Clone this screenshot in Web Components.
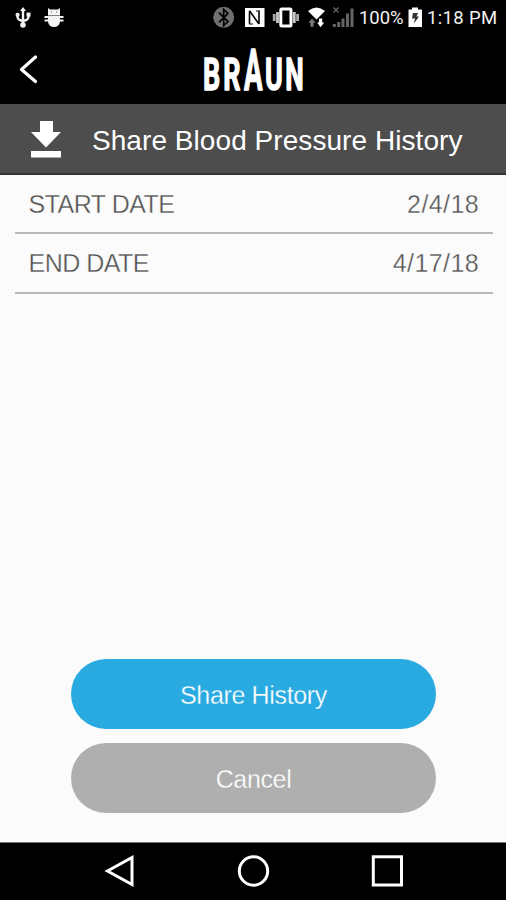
<!DOCTYPE html>
<html lang="en">
<head>
<meta charset="utf-8">
<title>Share Blood Pressure History</title>
<style>html,body{margin:0;height:100%;background:#fbfbfb}</style>
</head>
<body>
<share-screen></share-screen>
<script>
const define = (name, html) => customElements.define(name, class extends HTMLElement {
  constructor() {
    super();
    const t = document.createElement('template');
    t.innerHTML = html;
    this.attachShadow({ mode: 'open' }).append(t.content.cloneNode(true));
  }
});

define('status-bar', `
<style>
:host{display:flex;height:36px;background:#000;color:#f2f2f2;font:400 18.5px/37px Roboto,sans-serif}
svg{display:block;flex:none}
.pct{width:47px;margin-left:2px;letter-spacing:-.05px}
.time{margin-left:3px;letter-spacing:.35px;white-space:nowrap}
</style>
<svg width="70" height="36" viewBox="0 0 70 36" fill="#f4f4f4">
  <path d="M23 7l3 4h-6z"/><circle cx="23" cy="25" r="2.8"/>
  <path d="M23 9v15M17.6 15v2q0 3 5.4 4q5.4-1 5.4-4v-3" fill="none" stroke="#f4f4f4" stroke-width="2.4"/>
  <circle cx="17.6" cy="14.8" r="2.1"/><path d="M26.5 12.6h4v4h-4z"/>
  <path d="M48 8l2 1.6h8L60 8v7H48zM44.5 16h19v2h-19zM44.5 19.5h19v2h-19zM48 15h12v7q-1 5-6 5t-6-5z"/>
  <path d="M51 12h1M56 12h1" stroke="#555"/><path d="M48 15.5h12" stroke="#666" stroke-width=".8"/>
</svg>
<svg style="margin-left:140px" width="147" height="36" viewBox="210 0 147 36">
  <circle cx="223.7" cy="17.3" r="10.5" fill="#707070"/>
  <path d="M219 12.6l9 9-4.3 4V9.4l4.3 4-9 9" fill="none" stroke="#000" stroke-width="1.7"/>
  <rect x="245" y="8" width="19.5" height="19" fill="#fff"/>
  <path d="M249.5 23.8V11.2M249.5 10.8l9.5 13.200M259 24V11.200" fill="none" stroke="#000" stroke-width="1.6"/>
  <path d="M249 24h4M256 11h4" stroke="#000" stroke-width="1"/>
  <rect x="280.8" y="9" width="10.2" height="17" rx="1" fill="none" stroke="#fff" stroke-width="3"/>
  <path d="M277.5 12v11M294.3 12v11" stroke="#c7c7c7" stroke-width="2.8"/>
  <path d="M274.200 14v7M297.6 14v7" stroke="#aaa" stroke-width="2.8"/>
  <path d="M308 11q8.5-7 17 0l-8.5 8.5z" fill="#fff"/>
  <path d="M312 18.500l3.6 4.3h-2v4h-3.200v-4h-2z" fill="#777"/>
  <path d="M319 18.5h3.200v4h2l-3.6 4.800-3.6-4.800h2z" fill="#fff"/>
  <path d="M333.5 7.5l5 5m0-5l-5 5" stroke="#666" stroke-width="1.4"/>
  <path d="M334.3 24v3M338.7 22v5M343 18.5V27M347.5 13.5V27M352 8.5V27" stroke="#656565" stroke-width="3"/>
</svg>
<span class="pct">100%</span>
<svg width="18" height="36" viewBox="406 0 18 36"><path d="M408.5 9.5h3.5v-2h6v2h4V27h-13.500z" fill="#fff"/><path d="M413 13h5l-1.500 3.500h2.500l-5 7 1-5h-3z" fill="#333"/></svg>
<span class="time">1:18 PM</span>`);

define('brand-bar', `
<style>
:host{display:grid;grid-template-columns:60px 1fr 60px;height:68px;background:#000;color:#fff}
svg{display:block}
.logo{display:flex;justify-content:center}
</style>
<svg width="60" height="68" viewBox="0 36 60 68"><path d="M35.500 57L21.500 69.500l14 12" fill="none" stroke="#fff" stroke-width="3.200" stroke-linecap="round" stroke-linejoin="round"/></svg>
<div class="logo"><svg width="106" height="68" viewBox="200 36 106 68" fill="#fff" stroke="#fff" stroke-width="1.400" stroke-linejoin="round" font-family="Roboto,sans-serif" font-weight="700">
<text transform="translate(203 90) scale(.62 1)" font-size="43.500">B</text>
<text transform="translate(223.200 90) scale(.62 1)" font-size="43.500">R</text>
<text transform="translate(244 90) scale(.48 1)" font-size="57.500">A</text>
<text transform="translate(265 90) scale(.62 1)" font-size="43.500">U</text>
<text transform="translate(285.300 90) scale(.6 1)" font-size="43.500">N</text>
</svg></div>`);

define('page-heading', `
<style>
:host{display:flex;align-items:center;box-sizing:border-box;height:71px;padding-left:30px;background:#4d4d4d;border-bottom:2px solid #363636;color:#fff;font:28px/36px "Liberation Sans",sans-serif;letter-spacing:.06px}
svg{display:block;flex:none;margin-right:30px}
span{white-space:nowrap;padding-top:5px}
</style>
<svg width="32" height="38" viewBox="0 0 32 38" fill="#fff"><path d="M10 1h13v11h8L16 27.500 1 12h9zM1 31h30v6.500H1z"/></svg>
<span><slot></slot></span>`);

define('date-row', `
<style>
:host{display:flex;justify-content:space-between;align-items:center;box-sizing:border-box;height:60px;margin:0 13px 0 15px;padding:0 14px 0 13.500px;border-bottom:2px solid #b8b8b8;color:#505050;font:25px/30px "Liberation Sans",sans-serif;-webkit-text-stroke:.35px #fbfbfb}
.label{letter-spacing:-.5px}.value{letter-spacing:.4px}
</style>
<span class="label"><slot name="label"></slot></span><span class="value"><slot></slot></span>`);

define('pill-button', `
<style>
:host{display:block}
button{display:block;width:100%;height:70px;border:0;padding:2px 0 0;border-radius:35px;background:var(--fill);color:#fff;font:25px/30px "Liberation Sans",sans-serif;letter-spacing:-.35px;-webkit-text-stroke:.3px var(--fill)}
</style>
<button><slot></slot></button>`);

define('nav-bar', `
<style>
:host{display:flex;justify-content:center;box-sizing:border-box;height:58px;background:#000;border-top:1px solid #777}
svg{display:block}
</style>
<svg width="506" height="57" viewBox="0 843 506 57" fill="none" stroke="#fff" stroke-width="3">
<path d="M132 857.500v27L107.500 871z"/><circle cx="253.500" cy="871" r="14.200"/><rect x="373.300" y="856.800" width="28.200" height="28.200"/>
</svg>`);

define('share-screen', `
<style>
:host{display:flex;flex-direction:column;width:506px;height:900px;background:#fbfbfb;overflow:hidden}
main{flex:1;display:flex;flex-direction:column}
date-row:first-child{height:59px}
.actions{margin-top:auto;padding:0 70px 29px 71px;display:grid;gap:14px}
.share{--fill:#29abe2}.cancel{--fill:#afafaf}
</style>
<status-bar></status-bar>
<brand-bar></brand-bar>
<page-heading>Share Blood Pressure History</page-heading>
<main>
  <date-row><span slot="label">START DATE</span>2/4/18</date-row>
  <date-row><span slot="label">END DATE</span>4/17/18</date-row>
  <div class="actions">
    <pill-button class="share">Share History</pill-button>
    <pill-button class="cancel">Cancel</pill-button>
  </div>
</main>
<nav-bar></nav-bar>`);
</script>
</body>
</html>
